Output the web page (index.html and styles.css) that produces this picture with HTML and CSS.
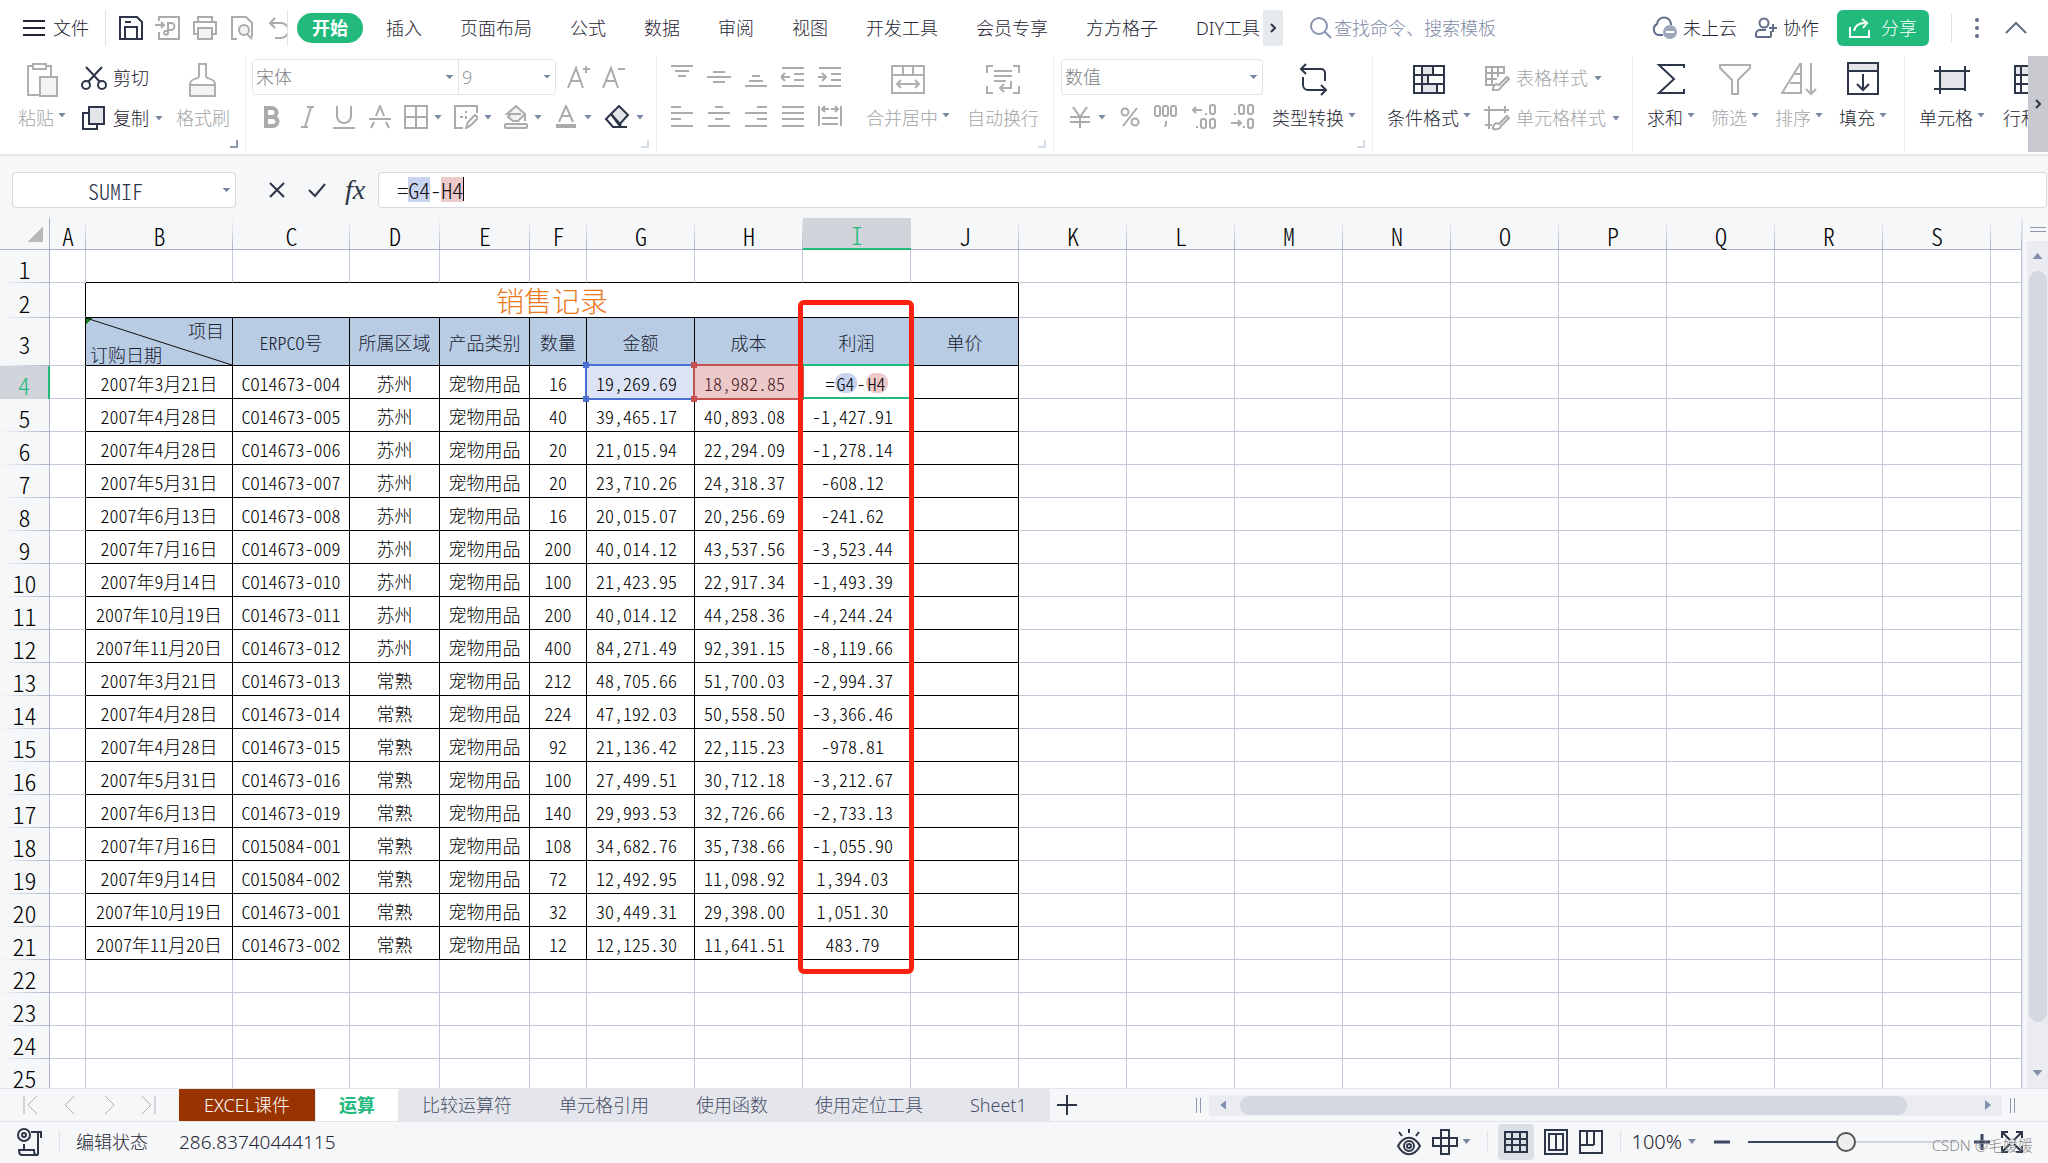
FILE: index.html
```html
<!DOCTYPE html>
<html lang="zh-CN">
<head>
<meta charset="utf-8">
<title>销售记录</title>
<link rel="stylesheet" href="styles.css">
</head>
<body>
<header class="menubar">
  <button class="file-btn"><svg width="22" height="18" viewBox="0 0 22 18"><path d="M0 2h22M0 9h22M0 16h22"/></svg>文件</button>
  <div class="quick">
    <button aria-label="保存"><svg class="ink" width="26" height="26" viewBox="0 0 26 26"><path d="M2 2h17l5 5v17H2zM7 24V12h12v12M7 7h6"/></svg></button>
    <button aria-label="输出为PDF"><svg class="dim" width="26" height="26" viewBox="0 0 26 26"><path d="M4 6V2h20v22H4v-7M0 10h9M6 7l3 3-3 3M12 8h4a3 3 0 0 1 0 7h-3v3a2 2 0 1 1-3-2h3V8"/></svg></button>
    <button aria-label="打印"><svg class="dim" width="26" height="26" viewBox="0 0 26 26"><path d="M6 7V2h14v5M6 19H2V7h22v12h-4"/><rect class="fill" x="6" y="13" width="14" height="11"/></svg></button>
    <button aria-label="打印预览"><svg class="dim" width="26" height="26" viewBox="0 0 26 26"><path d="M8 24H3V2h14l6 6v14"/><circle class="fill" cx="15" cy="15" r="5"/><path d="M18 19l5 5"/></svg></button>
    <button aria-label="撤销"><svg class="dim" width="26" height="26" viewBox="0 0 26 26"><path d="M9 3L4 8l5 5M4 8h11a7 7 0 0 1 0 15H9"/></svg></button>
  </div>
  <nav class="tabs">
    <button class="active">开始</button><button>插入</button><button>页面布局</button><button>公式</button><button>数据</button><button>审阅</button><button>视图</button><button>开发工具</button><button>会员专享</button><button>方方格子</button><button class="cut">DIY工具</button>
    <button class="more" aria-label="更多选项卡"><svg class="ink" width="8" height="10" viewBox="0 0 8 10"><path d="M2 1l4 4-4 4"/></svg></button>
  </nav>
  <label class="search"><svg width="22" height="22" viewBox="0 0 22 22"><circle cx="9" cy="9" r="8"/><path d="M15 15l6 6"/></svg><input type="text" placeholder="查找命令、搜索模板"></label>
  <div class="account">
    <button><svg class="slate" width="26" height="24" viewBox="0 0 26 24"><path d="M12 19H7a6 6 0 0 1-1-11 7 7 0 0 1 14 1"/><circle class="badge" cx="19" cy="16" r="7"/><path class="minus" d="M15 16h8"/></svg>未上云</button>
    <button><svg class="slate" width="22" height="22" viewBox="0 0 22 22"><circle cx="9" cy="6" r="4.500"/><path d="M16 14v5a1 1 0 0 1-1 1H2a1 1 0 0 1-1-1v-2a4 4 0 0 1 4-4h6M14 11h8M18 7v8"/></svg>协作</button>
    <button class="share"><svg width="22" height="20" viewBox="0 0 22 20"><path d="M1 9v10h19v-7M5 13c1-5 5-8 11-8M13 1l5 4-4 5"/></svg>分享</button>
    <span class="rule"></span>
    <button aria-label="更多"><svg class="dots" width="6" height="20" viewBox="0 0 6 20"><circle cx="3" cy="2" r="2"/><circle cx="3" cy="10" r="2"/><circle cx="3" cy="18" r="2"/></svg></button>
    <button aria-label="收起功能区"><svg class="slate" width="24" height="14" viewBox="0 0 24 14"><path d="M2 12L12 2l10 10"/></svg></button>
  </div>
</header>

<section class="ribbon" aria-label="开始">
  <div class="group clip">
    <button class="tool off"><svg width="34" height="36" viewBox="0 0 34 36"><path d="M14 33H3V4h5M21 4h5v11M8 2h13v5H8z"/><rect class="fill" x="15" y="15" width="17" height="19"/></svg><span>粘贴<i class="caret"></i></span></button>
    <div class="stack">
      <button class="mini"><svg class="ink" width="26" height="26" viewBox="0 0 26 26"><circle cx="5" cy="20" r="4"/><circle cx="21" cy="20" r="4"/><path d="M7 17L21 2M19 17L5 2"/></svg>剪切</button>
      <button class="mini"><svg class="ink" width="26" height="26" viewBox="0 0 26 26"><path d="M8 8H2v16h14v-5"/><rect class="fill" x="8" y="2" width="15" height="17"/></svg>复制<i class="caret"></i></button>
    </div>
    <button class="tool off"><svg width="30" height="36" viewBox="0 0 30 36"><path d="M11 2h7v12c0 4 9 1 9 9H2c0-8 9-5 9-9z"/><path class="fill" d="M2 23h25v11H2z"/></svg><span>格式刷</span></button>
    <i class="corner strong"></i>
  </div>

  <div class="group fonts">
    <div class="row">
      <div class="font-box"><select class="font-name" aria-label="字体"><option>宋体</option></select><select class="font-size" aria-label="字号"><option>9</option></select></div>
      <button class="ic" aria-label="增大字号"><svg class="dim" width="26" height="26" viewBox="0 0 26 26"><path d="M2 24L10 4l7 20M5 17h10M17 5h7M20 2v7"/></svg></button>
      <button class="ic" aria-label="减小字号"><svg class="dim" width="26" height="26" viewBox="0 0 26 26"><path d="M2 24L10 4l7 20M5 17h10M17 5h7"/></svg></button>
    </div>
    <div class="row marks">
      <button class="ic" aria-label="加粗"><svg class="dim bold" width="24" height="24" viewBox="-2 0 24 24"><path d="M4 3h6a4 4 0 0 1 0 9H4zM4 12h7a4 4 0 0 1 0 9H4z"/></svg></button>
      <button class="ic" aria-label="倾斜"><svg class="dim" width="24" height="24" viewBox="-4 0 24 24"><path d="M7 2h7M1 22h7M11 2L5 22"/></svg></button>
      <button class="ic" aria-label="下划线"><svg class="dim" width="24" height="24" viewBox="0 0 24 24"><path d="M5 1v10a7 7 0 0 0 14 0V1M1 23h22"/></svg></button>
      <button class="ic" aria-label="删除线"><svg class="dim" width="24" height="24" viewBox="0 0 24 24"><path d="M8 11l4-10 4 10M1 14h22M6 17l-3 6M18 17l3 6"/></svg></button>
      <button class="ic" aria-label="边框"><svg class="dim" width="24" height="24" viewBox="0 0 24 24"><path d="M1 1h22v22H1zM12 1v22M1 12h22"/></svg><i class="caret"></i></button>
      <button class="ic" aria-label="绘图边框"><svg class="dim" width="24" height="24" viewBox="0 0 24 24"><path d="M23 8V1H1v22h8M12 23l2-6 7-7 3 3-8 8zM6 12h3M11 12h2M12 6v2M12 11v3"/></svg><i class="caret"></i></button>
      <button class="ic" aria-label="填充颜色"><svg class="dim" width="24" height="24" viewBox="0 0 24 24"><path class="fill" d="M3 9L12 1l9 8-7 7H9L4 12l3-3zM7 9h10M21 9v7"/><rect class="fill" x="1" y="19" width="22" height="4" rx="1"/></svg><i class="caret"></i></button>
      <button class="ic" aria-label="字体颜色"><svg class="dim" width="24" height="24" viewBox="0 0 24 24"><path d="M5 17L12 1l7 16M8 11h8"/><path class="thick" d="M2 21h20"/></svg><i class="caret"></i></button>
      <button class="ic" aria-label="清除"><svg class="ink" width="26" height="24" viewBox="0 0 26 24"><path class="fill" d="M7 9l8-8 9 9-9 10z"/><path d="M7 9l-5 5 7 8h6l2-3M7 9l9 10M9 22h14"/></svg><i class="caret"></i></button>
    </div>
    <i class="corner"></i>
  </div>

  <div class="group align">
    <div class="pads">
      <button class="ic" aria-label="顶端对齐"><svg class="dim" width="24" height="24" viewBox="0 0 24 24"><path d="M1 2h22M5 7h14M8 12h8"/></svg></button>
      <button class="ic" aria-label="垂直居中"><svg class="dim" width="24" height="24" viewBox="0 0 24 24"><path d="M6 8h12M0 13h24M6 18h12"/></svg></button>
      <button class="ic" aria-label="底端对齐"><svg class="dim" width="24" height="24" viewBox="0 0 24 24"><path d="M8 12h8M5 17h14M1 22h22"/></svg></button>
      <button class="ic" aria-label="减少缩进"><svg class="dim" width="24" height="24" viewBox="0 0 24 24"><path d="M1 4h22M13 10h10M13 16h10M1 22h22M9 13H0M4 9l-4 4 4 4"/></svg></button>
      <button class="ic" aria-label="增加缩进"><svg class="dim" width="24" height="24" viewBox="0 0 24 24"><path d="M1 4h22M13 10h10M13 16h10M1 22h22M0 13h8M4 9l4 4-4 4"/></svg></button>
      <button class="ic" aria-label="左对齐"><svg class="dim" width="24" height="24" viewBox="0 0 24 24"><path d="M1 3h10M1 9h22M1 15h10M1 22h22"/></svg></button>
      <button class="ic" aria-label="水平居中"><svg class="dim" width="24" height="24" viewBox="0 0 24 24"><path d="M8 3h8M1 9h22M8 15h8M1 22h22"/></svg></button>
      <button class="ic" aria-label="右对齐"><svg class="dim" width="24" height="24" viewBox="0 0 24 24"><path d="M13 3h10M1 9h22M13 15h10M1 22h22"/></svg></button>
      <button class="ic" aria-label="两端对齐"><svg class="dim" width="24" height="24" viewBox="0 0 24 24"><path d="M1 3h22M1 9h22M1 15h22M1 22h22"/></svg></button>
      <button class="ic" aria-label="分散对齐"><svg class="dim" width="24" height="24" viewBox="0 0 24 24"><path d="M1 2v20M23 2v20M4 14h16M4 20h16M4 5h7M13 5h7M7 2L4 5l3 3M17 2l3 3-3 3"/></svg></button>
    </div>
    <button class="tool off"><svg width="36" height="34" viewBox="0 0 36 34"><path d="M2 4h32v27H2zM2 13h32M13 4v9M23 4v9M7 22h22M11 18l-4 4 4 4M25 18l4 4-4 4"/></svg><span>合并居中<i class="caret"></i></span></button>
    <button class="tool off"><svg width="36" height="34" viewBox="0 0 36 34"><path d="M8 4H2v7M28 4h6v7M8 31H2v-7M28 31h6v-7M9 9h18M9 14h18M9 19h12M26 19v7H15M19 22l-4 4 4 4"/></svg><span>自动换行</span></button>
    <i class="corner"></i>
  </div>

  <div class="group number">
    <div class="stack">
      <select class="format" aria-label="数字格式"><option>数值</option></select>
      <div class="row">
        <button class="ic" aria-label="货币"><svg class="dim" width="24" height="24" viewBox="0 0 24 24"><path d="M5 2l7 10 7-10M12 12v11M2 12h20M2 17h20"/></svg><i class="caret"></i></button>
        <button class="ic" aria-label="百分比"><svg class="dim" width="22" height="24" viewBox="0 0 22 24"><circle cx="6" cy="7" r="3.500"/><circle cx="16" cy="17" r="3.500"/><path d="M18 3L4 21"/></svg></button>
        <button class="ic" aria-label="千位分隔"><svg class="dim" width="26" height="24" viewBox="0 0 26 24"><rect x="2" y="1" width="5" height="10" rx="2"/><rect x="10" y="1" width="5" height="10" rx="2"/><rect x="18" y="1" width="5" height="10" rx="2"/><path d="M13 16v3l-1 3"/></svg></button>
        <button class="ic" aria-label="增加小数"><svg class="dim" width="26" height="26" viewBox="0 0 26 26"><rect x="18" y="1" width="5" height="9" rx="2"/><path d="M1 6h9M4 3L1 6l3 3M14 9v2M5 22v2"/><rect x="9" y="15" width="5" height="9" rx="2"/><rect x="18" y="15" width="5" height="9" rx="2"/></svg></button>
        <button class="ic" aria-label="减少小数"><svg class="dim" width="26" height="26" viewBox="0 0 26 26"><rect x="9" y="1" width="5" height="9" rx="2"/><rect x="18" y="1" width="5" height="9" rx="2"/><path d="M5 9v2M1 19h10M8 16l3 3-3 3M14 22v2"/><rect x="18" y="15" width="5" height="9" rx="2"/></svg></button>
      </div>
    </div>
    <button class="tool"><svg width="30" height="34" viewBox="0 0 30 34"><path d="M2 7h20a4 4 0 0 1 4 4v8M7 2L2 7l5 5M4 15v8a5 5 0 0 0 5 5h18M22 23l5 5-5 5"/></svg><span>类型转换<i class="caret"></i></span></button>
    <i class="corner"></i>
  </div>

  <div class="group styles">
    <button class="tool"><svg width="34" height="34" viewBox="0 0 34 34"><path class="fill" d="M10 4h11v9H10zM10 13h6v9h-6zM10 22h15v9H10z"/><path d="M2 4h30v27H2zM2 13h30M2 22h30M10 4v27"/></svg><span>条件格式<i class="caret"></i></span></button>
    <div class="stack">
      <button class="mini off"><svg class="dim" width="26" height="26" viewBox="0 0 26 26"><path d="M10 20H2V2h18v7M2 8h17M2 14h11M8 2v18M14 2v10M9 25c0-4 2-7 6-5l8-8 2 2-8 8c0 2-3 4-8 3z"/></svg>表格样式<i class="caret"></i></button>
      <button class="mini off"><svg class="dim" width="26" height="26" viewBox="0 0 26 26"><path d="M0 5h25M5 1v23M21 1v7M1 20h7M9 24c0-4 2-7 6-5l8-8 2 2-8 8c0 2-3 4-8 3z"/></svg>单元格样式<i class="caret"></i></button>
    </div>
  </div>

  <div class="group edit">
    <button class="tool"><svg width="32" height="34" viewBox="0 0 32 34"><path d="M29 6V3H4l15 14L4 31h25v-4"/></svg><span>求和<i class="caret"></i></span></button>
    <button class="tool off"><svg width="34" height="34" viewBox="0 0 34 34"><path d="M2 3h30v3L20 18v14h-6V18L2 6z"/></svg><span>筛选<i class="caret"></i></span></button>
    <button class="tool off"><svg width="36" height="34" viewBox="0 0 36 34"><path d="M20 2v29H1L19 2zM14 12h6M9 21h11M30 1v31M25 27l5 5 5-5"/></svg><span>排序<i class="caret"></i></span></button>
    <button class="tool"><svg width="34" height="34" viewBox="0 0 34 34"><path class="fill" d="M2 1h30v8H2z"/><path d="M2 9v23h30V9M17 12v16M11 22l6 6 6-6"/></svg><span>填充<i class="caret"></i></span></button>
  </div>

  <div class="group last">
    <button class="tool"><svg width="38" height="34" viewBox="0 0 38 34"><path class="fill" d="M7 9h25v18H7z"/><path d="M1 9h36M1 27h27M7 4v28M32 4v20M32 26v3"/></svg><span>单元格<i class="caret"></i></span></button>
    <button class="tool rows"><svg width="34" height="34" viewBox="0 0 34 34"><path class="fill" d="M2 4h30v9H2z"/><path d="M2 13v18h30V13M2 22h30M8 4v27"/></svg><span>行和列</span></button>
  </div>
  <button class="ribbon-next" aria-label="向右滚动"><svg class="ink" width="8" height="10" viewBox="0 0 8 10"><path d="M2 1l4 4-4 4"/></svg></button>
</section>

<section class="formula">
  <select class="name-box" aria-label="名称框"><option>SUMIF</option></select>
  <button aria-label="取消"><svg class="ink" width="18" height="18" viewBox="0 0 18 18"><path d="M2 2l14 14M16 2L2 16"/></svg></button>
  <button aria-label="输入"><svg class="ink" width="20" height="18" viewBox="0 0 20 18"><path d="M2 9l6 6L18 3"/></svg></button>
  <button class="fx" aria-label="插入函数">fx</button>
  <input class="formula-input" type="text" aria-label="编辑栏" value="=G4-H4">
</section>

<main class="sheet">
  <div class="canvas">
    <table id="grid"></table>
    <div class="callout"></div>
  </div>
  <aside class="vscroll">
    <span class="split"></span>
    <div class="track"><i class="up"></i><div class="thumb"></div><i class="down"></i></div>
  </aside>
</main>

<div class="sheetbar">
  <div class="sheetnav">
    <button aria-label="第一个"><svg width="18" height="20" viewBox="0 0 18 20"><path d="M2 1v18M15 1L6 10l9 9"/></svg></button>
    <button aria-label="上一个"><svg width="18" height="20" viewBox="0 0 18 20"><path d="M13 1L4 10l9 9"/></svg></button>
    <button aria-label="下一个"><svg width="18" height="20" viewBox="0 0 18 20"><path d="M5 1l9 9-9 9"/></svg></button>
    <button aria-label="最后一个"><svg width="18" height="20" viewBox="0 0 18 20"><path d="M16 1v18M3 1l9 9-9 9"/></svg></button>
  </div>
  <div class="sheettabs"><button class="brick">EXCEL课件</button><button class="current">运算</button><button>比较运算符</button><button>单元格引用</button><button>使用函数</button><button>使用定位工具</button><button>Sheet1</button></div>
  <button class="add" aria-label="新建工作表"><svg class="ink" width="22" height="22" viewBox="0 0 22 22"><path d="M1 11h20M11 1v20"/></svg></button>
  <div class="hscroll"><span class="grip"></span><div class="track"><i class="left"></i><div class="thumb"></div><i class="right"></i></div><span class="grip"></span></div>
</div>

<footer class="status">
  <svg class="ink" width="26" height="30" viewBox="0 0 26 30"><circle cx="7" cy="8" r="6"/><circle cx="7" cy="8" r="2"/><path d="M14 5h10v6M21 5v22c0 1-1 1-2 1H5c-2 0-3-1-3-5h15c0 3 1 5 3 5M7 17v6"/></svg>
  <span class="rule"></span>
  <span>编辑状态</span>
  <output>286.83740444115</output>
  <div class="views">
    <button aria-label="护眼模式"><svg class="ink" width="26" height="28" viewBox="0 0 26 28"><path d="M2 18c6-11 16-11 22 0-6 11-16 11-22 0zM13 1v4M3 4l3 4M23 4l-3 4"/><circle cx="13" cy="18" r="5"/><circle cx="13" cy="18" r="2"/></svg></button>
    <button aria-label="阅读模式"><svg class="ink" width="26" height="26" viewBox="0 0 26 26"><path d="M9 1h8v24H9zM1 9h24v8H1z"/></svg><i class="caret"></i></button>
    <span class="rule"></span>
    <button class="on" aria-label="普通视图"><svg class="ink" width="26" height="24" viewBox="0 0 26 24"><path d="M2 2h22v20H2zM2 9h22M2 15h22M9 2v20M17 2v20"/></svg></button>
    <button aria-label="页面布局"><svg class="ink" width="24" height="26" viewBox="0 0 24 26"><path d="M1 1h22v24H1zM5 5h14v16H5zM12 5v16"/></svg></button>
    <button aria-label="分页预览"><svg class="ink" width="26" height="26" viewBox="0 0 26 26"><path d="M2 2h22v22H2zM9 2v14h7M16 2v14M2 16h7"/></svg></button>
    <span class="rule"></span>
    <button class="zoom">100%<i class="caret"></i></button>
    <button aria-label="缩小"><svg class="heavy" width="16" height="16" viewBox="0 0 16 16"><path d="M0 8h16"/></svg></button>
    <input type="range" min="0" max="100" value="47" aria-label="缩放">
    <button aria-label="放大"><svg class="heavy" width="16" height="16" viewBox="0 0 16 16"><path d="M0 8h16M8 0v16"/></svg></button>
    <button aria-label="全屏"><svg class="ink" width="24" height="24" viewBox="0 0 24 24"><path d="M2 8V2h6M16 2h6v6M2 16v6h6M16 22h6v-6M2 2l8 8M22 2l-8 8M2 22l8-8M22 22l-8-8"/></svg></button>
  </div>
  <span class="watermark">CSDN @毛媛媛</span>
</footer>
<script src="grid.js"></script>
</body>
</html>
```
FILE: grid.js
```js
const letters = "ABCDEFGHIJKLMNOPQRS".split("");
const widths = [50, 36, 147, 117, 90, 90, 57].concat(Array(13).fill(108));
const records = [
  ["2007年3月21日", "CO14673-004", "苏州", "16", "19,269.69", "18,982.85", ""],
  ["2007年4月28日", "CO14673-005", "苏州", "40", "39,465.17", "40,893.08", "-1,427.91"],
  ["2007年4月28日", "CO14673-006", "苏州", "20", "21,015.94", "22,294.09", "-1,278.14"],
  ["2007年5月31日", "CO14673-007", "苏州", "20", "23,710.26", "24,318.37", "-608.12"],
  ["2007年6月13日", "CO14673-008", "苏州", "16", "20,015.07", "20,256.69", "-241.62"],
  ["2007年7月16日", "CO14673-009", "苏州", "200", "40,014.12", "43,537.56", "-3,523.44"],
  ["2007年9月14日", "CO14673-010", "苏州", "100", "21,423.95", "22,917.34", "-1,493.39"],
  ["2007年10月19日", "CO14673-011", "苏州", "200", "40,014.12", "44,258.36", "-4,244.24"],
  ["2007年11月20日", "CO14673-012", "苏州", "400", "84,271.49", "92,391.15", "-8,119.66"],
  ["2007年3月21日", "CO14673-013", "常熟", "212", "48,705.66", "51,700.03", "-2,994.37"],
  ["2007年4月28日", "CO14673-014", "常熟", "224", "47,192.03", "50,558.50", "-3,366.46"],
  ["2007年4月28日", "CO14673-015", "常熟", "92", "21,136.42", "22,115.23", "-978.81"],
  ["2007年5月31日", "CO14673-016", "常熟", "100", "27,499.51", "30,712.18", "-3,212.67"],
  ["2007年6月13日", "CO14673-019", "常熟", "140", "29,993.53", "32,726.66", "-2,733.13"],
  ["2007年7月16日", "CO15084-001", "常熟", "108", "34,682.76", "35,738.66", "-1,055.90"],
  ["2007年9月14日", "CO15084-002", "常熟", "72", "12,492.95", "11,098.92", "1,394.03"],
  ["2007年10月19日", "CO14673-001", "常熟", "32", "30,449.31", "29,398.00", "1,051.30"],
  ["2007年11月20日", "CO14673-002", "常熟", "12", "12,125.30", "11,641.51", "483.79"]
];
const cell = (cls, text = "") => `<td class="${cls}">${text}</td>`;
const blanks = n => "<td></td>".repeat(n);

let html = "<colgroup>" + widths.map(w => `<col style="width:${w}px">`).join("") + "<col></colgroup>";
html += '<thead><tr><th class="all"></th>' +
  letters.map(c => `<th scope="col"${c === "I" ? ' class="sel"' : ""}>${c}</th>`).join("") +
  "<th></th></tr></thead><tbody>";

for (let r = 1; r <= 25; r++) {
  html += `<tr class="r${r}"><th scope="row"${r === 4 ? ' class="sel"' : ""}>${r}</th>`;
  if (r === 1) {
    html += blanks(1) + cell("under").repeat(9) + blanks(10);
  } else if (r === 2) {
    html += cell("edge") + '<td class="data title" colspan="9">销售记录</td>' + blanks(10);
  } else if (r === 3) {
    html += cell("edge") +
      '<td class="data head split-head"><svg viewBox="0 0 146 47" preserveAspectRatio="none"><path d="M0 0L146 47"/></svg><span class="top">项目</span><span class="bottom">订购日期</span></td>' +
      ["ERPCO号", "所属区域", "产品类别", "数量", "金额", "成本", "利润", "单价"].map(t => cell("data head", t)).join("") +
      blanks(10);
  } else if (r <= 21) {
    const [date, no, area, qty, amount, cost, profit] = records[r - 4];
    const first = r === 4;
    html += cell("edge") + cell("data", date) + cell("data", no) + cell("data", area) +
      cell("data", "宠物用品") + cell("data", qty) +
      cell("data num" + (first ? " ref blue" : ""), amount) +
      cell("data num" + (first ? " ref red" : ""), cost) +
      (first ? cell("data editing", '=<mark class="b">G4</mark>-<mark class="r">H4</mark>') : cell("data num", profit)) +
      cell("data") + blanks(10);
  } else {
    html += blanks(20);
  }
  html += "</tr>";
}
document.getElementById("grid").innerHTML = html + "</tbody>";
```
FILE: styles.css
```css
* { box-sizing: border-box; }
body {
  margin: 0;
  height: 100vh;
  display: flex;
  flex-direction: column;
  overflow: hidden;
  background: #f6f7f9;
  color: #1f2533;
  font: 300 18px/24px "Noto Sans", "Noto Sans CJK SC", sans-serif;
}
button, input, select { font: inherit; color: inherit; }
button {
  display: flex;
  align-items: center;
  border: 0;
  padding: 0;
  background: none;
  white-space: nowrap;
}
select { appearance: none; border-radius: 0; }
svg { display: block; flex: none; fill: none; stroke: currentColor; stroke-width: 2; }
svg .fill { fill: #e3e5e8; }
.ink { color: #2d3548; }
.dim { color: #a9abad; }
.dim .fill, .off .fill { fill: #f3f3f3; }
.slate { color: #626d87; }
.caret {
  flex: none;
  width: 8px;
  height: 5px;
  background: #7b88a3;
  clip-path: polygon(0 0, 100% 0, 50% 100%);
}
.rule { width: 1px; height: 28px; background: #dfe1e6; }

.menubar { display: flex; align-items: center; flex: none; height: 56px; background: #fff; }
.file-btn { gap: 8px; padding: 0 16px 0 23px; height: 36px; border-right: 1px solid #e0e2e6; color: #1f2533; }
.quick { display: flex; gap: 11px; padding: 0 0 0 12px; width: 182px; height: 36px; align-items: center; border-right: 1px solid #e0e2e6; overflow: hidden; }
.tabs { display: flex; align-items: center; padding-left: 9px; }
.tabs button { padding: 0 19px; height: 30px; }
.tabs .active { padding: 0 15px; margin-right: 4px; border-radius: 15px; background: #21ba7c; color: #fff; font-weight: 700; }
.tabs .cut { padding-right: 3px; }
.tabs .more { padding: 0 6px; height: 36px; background: #e6e9ed; }
.search { display: flex; align-items: center; gap: 2px; margin-left: 27px; color: #8b95b0; }
.search input { border: 0; padding: 0; width: 200px; background: none; outline: 0; }
.search input::placeholder { color: #7d88a5; opacity: 1; }
.account { display: flex; align-items: center; margin-left: auto; padding-right: 20px; }
.account button { gap: 6px; margin-right: 18px; }
.account .badge { fill: #9fa8bb; stroke: none; }
.account .minus { stroke: #fff; }
.account .share { gap: 10px; height: 36px; padding: 0 12px; border-radius: 6px; background: #21ba7c; color: #fff; margin-right: 22px; }
.account .rule { margin-right: 22px; }
.account .dots { fill: #626d87; stroke: none; margin-right: 6px; }
.account button:last-child { margin: 0; }

.ribbon { display: flex; flex: none; height: 98px; background: #fff; box-shadow: 0 1px 3px #d4d6da; z-index: 1; overflow: hidden; clip-path: inset(0 0 -4px 0); }
.group { position: relative; display: flex; flex: none; align-items: flex-start; height: 96px; border-right: 1px solid #eceef0; }
.corner { position: absolute; right: 7px; bottom: 4px; width: 8px; height: 8px; border: solid #d3dbe8; border-width: 0 2px 2px 0; }
.corner.strong { border-color: #8d99b3; }
.tool { flex-direction: column; height: 74px; padding-top: 6px; justify-content: space-between; }
.tool > span, .mini { display: flex; align-items: center; }
.tool > span { gap: 4px; }
.tool .caret { margin-bottom: 6px; }
.tool svg { color: #2d3548; }
.off, .tool.off { color: #a2a4a7; }
.tool.off svg { color: #adafb1; }
.stack { display: flex; flex-direction: column; gap: 14px; padding-top: 9px; }
.mini { gap: 6px; height: 26px; }
.row { display: flex; align-items: center; }
.ic { gap: 6px; }
.clip { width: 246px; padding-left: 18px; }
.clip .stack { margin: 0 13px 0 15px; }
.fonts { flex-direction: column; width: 411px; padding: 3px 0 0 6px; }
.font-box { display: flex; width: 304px; height: 36px; margin-right: 10px; border: 1px solid #e0e2e6; border-radius: 4px; overflow: hidden; }
.fonts .row:first-child { gap: 9px; }
.fonts .font-box { margin-right: 1px; }
.font-box select, .format, .name-box {
  border: 0;
  padding: 0 3px;
  color: #7c7f86;
  background-color: #fff;
  background-image: linear-gradient(225deg, #7b88a3 50%, #0000 0), linear-gradient(135deg, #7b88a3 50%, #0000 0);
  background-size: 4px 4px;
  background-repeat: no-repeat;
  background-position: right 8px center, right 4px center;
}
.font-box .font-name { width: 206px; border-right: 1px solid #e0e2e6; }
.font-box .font-size { flex: 1; color: #999; }
.marks { gap: 12px; padding: 10px 0 0 8px; }
.bold { stroke-width: 4; }
.thick { stroke-width: 4; }
.align { width: 397px; padding-left: 13px; }
.pads { display: grid; grid-template-columns: repeat(5, 24px); column-gap: 13px; row-gap: 16px; padding-top: 8px; margin-right: 24px; }
.align .tool + .tool { margin-left: 17px; }
.number { width: 319px; padding-left: 7px; }
.number .stack { width: 202px; gap: 9px; padding-top: 3px; }
.format { height: 36px; border: 1px solid #e0e2e6; border-radius: 4px; }
.number .row { justify-content: space-between; padding: 0 7px; }
.number .tool { margin-left: 9px; }
.styles { width: 260px; padding-left: 14px; }
.styles .stack { margin-left: 13px; }
.edit { width: 272px; padding-left: 14px; gap: 16px; }
.last { flex: 1; width: 0; padding-left: 14px; gap: 18px; border: 0; overflow: hidden; }
.last .rows { align-items: center; }
.ribbon-next { flex: none; width: 20px; height: 96px; padding-left: 6px; background: #c8cacf; }

.formula { display: flex; flex: none; align-items: center; height: 64px; padding: 18px 1px 10px 12px; }
.name-box { width: 224px; height: 36px; border: 1px solid #d5d8dd; border-radius: 4px; color: #2d3548; text-align: center; text-align-last: center; padding-right: 20px; margin-right: 32px; font: 300 22px/30px "Noto Sans CJK SC", sans-serif; font-feature-settings: "hwid"; }
.formula button { margin-right: 21px; }
.formula .fx { margin: 0 13px 0 -3px; font: italic 28px/32px "Liberation Serif", serif; color: #2d3548; }
.formula-input {
  flex: 1;
  min-width: 0;
  height: 36px;
  border: 1px solid #d5d8dd;
  border-radius: 4px;
  padding: 0 18px 2px;
  font: 300 22px/30px "Noto Sans CJK SC", sans-serif;
  font-feature-settings: "hwid";
  color: #111;
  background: linear-gradient(#c8d3f0, #c8d3f0) 29px 4px / 22px 25px no-repeat,
    linear-gradient(#edc9c9, #edc9c9) 62px 4px / 22px 25px no-repeat,
    linear-gradient(#000, #000) 84px 4px / 1px 24px no-repeat, #fff;
}

.sheet { display: flex; flex: 1; min-height: 0; }
.canvas { position: relative; flex: 1; min-width: 0; overflow: hidden; background: #fff; border-right: 1px solid #dfe2ea; }
#grid { width: 100%; table-layout: fixed; border-collapse: separate; border-spacing: 0; font: 300 18px/24px "Noto Sans CJK SC", sans-serif; font-feature-settings: "hwid"; color: #000; }
#grid th { height: 32px; padding: 4px 0 0; font: 300 24px/24px "Noto Sans CJK SC", sans-serif; font-feature-settings: "hwid"; background: #f6f7f9; }
#grid thead th { border-bottom: 1px solid #a8b3c8; background: linear-gradient(#a8b3c800, #a8b3c8) right / 1px 100% no-repeat #f6f7f9; }
#grid tbody th { border-right: 1px solid #a8b3c8; background: linear-gradient(90deg, #a8b3c800, #a8b3c8) bottom / 100% 1px no-repeat #f6f7f9; }
#grid thead .sel { background: #d1d4db; color: #21ba7c; border-bottom: 2px solid #21ba7c; }
#grid tbody .sel { background: #d1d4db; color: #21ba7c; border-right: 2px solid #21ba7c; }
#grid thead .all { background: linear-gradient(135deg, #0000 50%, #b9b9b9 0) 28px 9px / 15px 15px no-repeat #f6f7f9; border-right: 1px solid #a8b3c8; }
#grid tbody tr { height: 33px; }
#grid tbody .r2 { height: 35px; }
#grid tbody .r3 { height: 48px; }
#grid td { height: 33px; padding: 0; text-align: center; white-space: nowrap; border: solid #c2c9da; border-width: 0 1px 1px 0; }
#grid .under { border-bottom-color: #000; }
#grid .edge { border-right-color: #000; }
#grid .data { border-color: #000; padding-top: 1px; }
#grid .title { color: #e9781c; font-size: 28px; line-height: 30px; padding: 0; }
#grid .head { background: #b8cce4; color: #1a2130; padding: 0; }
#grid .num { padding-right: 8px; }
#grid .split-head { position: relative; }
.split-head svg { position: absolute; inset: 0; width: 100%; height: 100%; stroke: #111; stroke-width: 1; background: linear-gradient(135deg, #118011 50%, #0000 0) 0 0 / 6px 6px no-repeat; }
.split-head span { position: absolute; line-height: 20px; }
.split-head .top { top: 2px; right: 8px; }
.split-head .bottom { bottom: 1px; left: 4px; }
.ref { position: relative; }
.ref::before, .ref::after { content: ""; position: absolute; }
.ref::after { inset: -2px; border: 2px solid var(--c); }
.ref::before {
  z-index: 1;
  inset: -4px;
  background: linear-gradient(var(--c), var(--c)) 0 0, linear-gradient(var(--c), var(--c)) 0 100%;
  background-size: 6px 6px;
  background-repeat: no-repeat;
}
#grid .blue { --c: #4a6fd0; background: #dce3f4; }
#grid .red { --c: #c55050; background: #edc9c9; color: #4a1a24; }
#grid .editing { position: relative; box-shadow: 0 -2px #21ba7c, inset 0 -1px #21ba7c; border-bottom-color: #21ba7c; }
mark { display: inline-block; height: 20px; line-height: 20px; color: inherit; border-radius: 9px; padding: 0 2px; }
mark.b { background: #c8d3f0; }
mark.r { background: #edc9c9; }
.callout { position: absolute; left: 798px; top: 82px; width: 116px; height: 674px; border: 5px solid #ff2010; border-radius: 6px; z-index: 2; }

.vscroll { display: flex; flex: none; flex-direction: column; width: 25px; padding-left: 4px; }
.split { height: 5px; margin: 9px 2px 9px 3px; border: solid #8d99b3; border-width: 1px 0; }
.track i { background: #8291ad; }
.vscroll .track { flex: 1; display: flex; flex-direction: column; align-items: center; padding: 12px 2px; background: #ebecf1; }
.vscroll .thumb { flex: 1; width: 18px; margin: 12px 0 48px; border-radius: 9px; background: #d5d8e0; }
.up, .down { width: 10px; height: 6px; }
.up { clip-path: polygon(50% 0, 100% 100%, 0 100%); }
.down { clip-path: polygon(0 0, 100% 0, 50% 100%); }

.sheetbar { display: flex; flex: none; align-items: stretch; height: 34px; border: solid #e2e4ea; border-width: 1px 0; color: #454e68; }
.sheetnav { display: flex; gap: 21px; padding: 0 22px; color: #b0b2b6; }
.sheetnav svg { stroke-width: 1; }
.sheettabs { display: flex; gap: 1px; background: #e5e6ec; }
.sheettabs button { padding: 0 23px; }
.sheettabs .brick { padding: 0 25px; background: #993300; color: #fff; }
.sheettabs .current { background: #fff; color: #21ba7c; font-weight: 700; }
.add { padding: 0 6px; }
.hscroll { display: flex; flex: none; width: 43%; align-items: center; margin-left: auto; padding: 0 33px 0 29px; }
.hscroll .track { flex: 1; display: flex; align-items: center; height: 21px; margin: 0 8px; padding: 0 11px; background: #ebecf1; }
.hscroll .thumb { flex: 1; height: 19px; margin: 0 78px 0 14px; border-radius: 9px; background: #d5d8e0; }
.grip { width: 5px; height: 15px; border: solid #8d99b3; border-width: 0 1px; }
.left, .right { width: 6px; height: 10px; }
.left { clip-path: polygon(100% 0, 100% 100%, 0 50%); }
.right { clip-path: polygon(0 0, 100% 50%, 0 100%); }

.status { position: relative; display: flex; flex: none; align-items: center; gap: 16px; height: 41px; padding: 0 24px 2px 17px; }
.status .rule { height: 22px; }
.status output { margin-left: 15px; font-size: 19px; }
.views { display: flex; align-items: center; margin-left: auto; gap: 10px; }
.views button { gap: 5px; }
.views .rule { margin: 0 6px; }
.views .on { padding: 6px 5px; margin-left: -6px; border-radius: 4px; background: #dbdfe6; }
.views .zoom { gap: 6px; font-size: 20px; margin: 0 8px 0 -5px; }
.views .heavy { stroke-width: 3; color: #3b4560; }
.views input { appearance: none; width: 208px; height: 20px; margin: 0 8px; background: linear-gradient(90deg, #3b4560 46%, #d0d4de 0) center / 100% 2px no-repeat; }
.views input::-webkit-slider-thumb { appearance: none; width: 20px; height: 20px; border: 2px solid #555; border-radius: 50%; background: #eee; }
.watermark { position: absolute; right: 15px; bottom: 8px; font-size: 15px; line-height: 20px; color: #8c8c8c; }
```
